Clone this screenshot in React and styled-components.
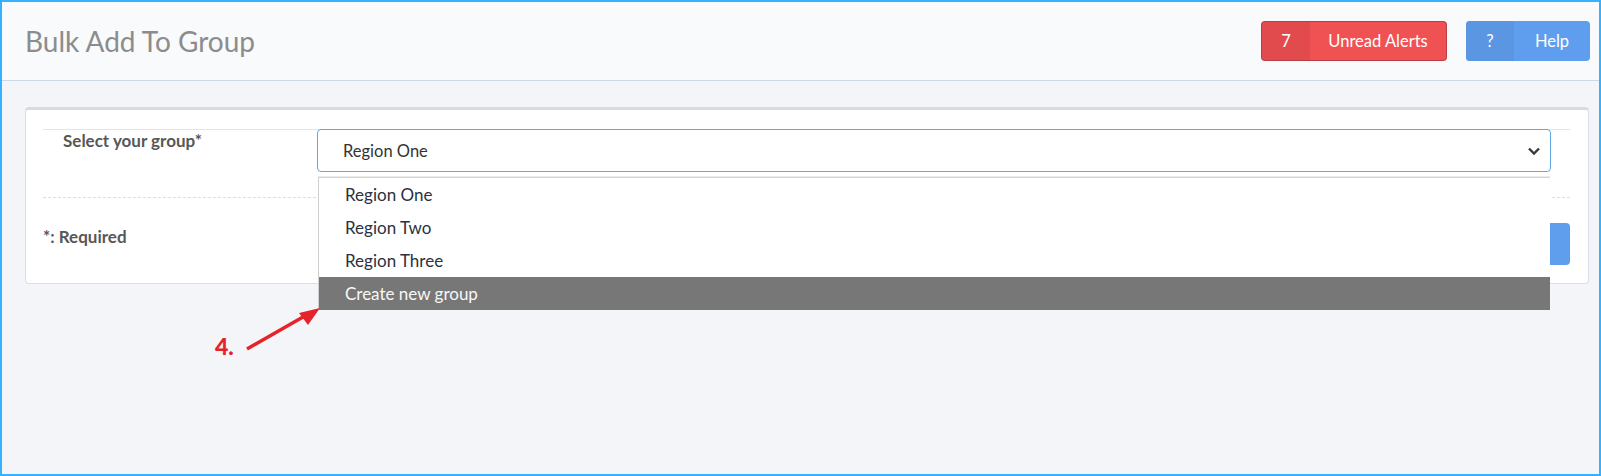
import React from 'react'
import styled, { createGlobalStyle } from 'styled-components'

const GlobalStyle = createGlobalStyle`
  html, body {
    margin: 0;
    padding: 0;
  }
  body {
    font-family: Lato, "Open Sans", sans-serif;
    background: #f4f5f9;
  }
  * {
    box-sizing: border-box;
  }
`

const Frame = styled.div`
  width: 1601px;
  height: 476px;
  border: 2px solid #36b1ff;
  display: flex;
  flex-direction: column;
  background: #f4f5f9;
  overflow: hidden;
`

const Header = styled.header`
  flex-shrink: 0;
  height: 79px;
  display: flex;
  align-items: center;
  justify-content: space-between;
  padding: 0 9px 0 23px;
  background: #f9fafc;
  border-bottom: 1px solid #c9d9e6;
`

const Title = styled.h1`
  margin: 0;
  font-size: 28px;
  font-weight: 400;
  color: #8c8c8c;
`

const Actions = styled.div`
  display: flex;
  gap: 19px;
`

const SplitButton = styled.button`
  display: flex;
  height: 40px;
  padding: 0;
  border: ${(p) => (p.$outlined ? '1px solid rgba(0,0,0,0.22)' : 'none')};
  border-radius: 4px;
  overflow: hidden;
  background: ${(p) => p.$color};
  color: #fff;
  font-family: inherit;
  font-size: 16.5px;
  cursor: pointer;
`

const Count = styled.span`
  width: 48px;
  display: flex;
  align-items: center;
  justify-content: center;
  background: ${(p) => p.$shade};
`

const ButtonLabel = styled.span`
  width: ${(p) => p.$width}px;
  display: flex;
  align-items: center;
  justify-content: center;
`

const Content = styled.main`
  position: relative;
  flex: 1;
  padding: 26px 10px 0 23px;
`

const Card = styled.section`
  background: #fff;
  border: 1px solid #d6dfe8;
  border-top: 3px solid #d3dce4;
  border-radius: 4px;
  padding: 19px 18px 18px 17px;
`

const FieldRow = styled.div`
  display: flex;
  border-top: 1px solid #e4e4e4;
  padding-bottom: 25px;
`

const FieldLabel = styled.label`
  width: 274px;
  padding: 0 0 0 20px;
  font-size: 17px;
  line-height: 22px;
  font-weight: 700;
  color: #575757;
`

const Select = styled.div`
  position: relative;
  flex: 1;
  margin: -1px 19px 0 0;
  height: 43px;
  display: flex;
  align-items: center;
  justify-content: space-between;
  padding: 0 9px 0 25px;
  border: 1px solid #62a8e5;
  border-radius: 4px;
  font-size: 16.5px;
  color: #333;
`

const Menu = styled.ul`
  position: absolute;
  z-index: 2;
  top: 47px;
  left: 0;
  right: 0;
  margin: 0;
  padding: 0;
  list-style: none;
  background: #fff;
  border-top: 1px solid #d4d4d4;
  border-left: 1px solid #cfcfcf;
  box-shadow: 0 -1px 0 #ececec;
`

const MenuItem = styled.li`
  height: 33px;
  line-height: 33px;
  padding-left: 26px;
  font-size: 17px;
  color: ${(p) => (p.$active ? '#f7f7f7' : '#2a3140')};
  background: ${(p) => (p.$active ? '#777777' : 'transparent')};
`

const Footer = styled.div`
  display: flex;
  justify-content: space-between;
  align-items: flex-start;
  border-top: 1px dashed #dedede;
  padding-top: 25px;
`

const Required = styled.span`
  margin-top: 3px;
  font-size: 17px;
  line-height: 22px;
  font-weight: 700;
  color: #575757;
`

const SubmitButton = styled.button`
  width: 110px;
  height: 42px;
  border: none;
  border-radius: 4px;
  background: #5f9ded;
  color: #fff;
  font-family: inherit;
  font-size: 16px;
`

const StepLabel = styled.span`
  position: absolute;
  z-index: 3;
  left: 213px;
  top: 253px;
  font-size: 23px;
  line-height: 24px;
  font-weight: 900;
  color: #e5232a;
`

const Pointer = styled.svg`
  position: absolute;
  z-index: 3;
  left: 228px;
  top: 214px;
`

const Chevron = () => (
  <svg width="14" height="10" viewBox="0 0 14 10">
    <path d="M2 2.5 L7 7.5 L12 2.5" fill="none" stroke="#343a40" strokeWidth="2.4" />
  </svg>
)

const options = ['Region One', 'Region Two', 'Region Three', 'Create new group']

export default function App() {
  return (
    <>
      <GlobalStyle />
      <Frame>
        <Header>
          <Title>Bulk Add To Group</Title>
          <Actions>
            <SplitButton $color="#f05153" $outlined>
              <Count $shade="#e24b4e">7</Count>
              <ButtonLabel $width={136}>Unread Alerts</ButtonLabel>
            </SplitButton>
            <SplitButton $color="#5f9eee">
              <Count $shade="#5b96e3">?</Count>
              <ButtonLabel $width={76}>Help</ButtonLabel>
            </SplitButton>
          </Actions>
        </Header>
        <Content>
          <Card>
            <FieldRow>
              <FieldLabel>Select your group*</FieldLabel>
              <Select>
                <span>Region One</span>
                <Chevron />
                <Menu>
                  {options.map((o, i) => (
                    <MenuItem key={o} $active={i === options.length - 1}>
                      {o}
                    </MenuItem>
                  ))}
                </Menu>
              </Select>
            </FieldRow>
            <Footer>
              <Required>*: Required</Required>
              <SubmitButton>Submit</SubmitButton>
            </Footer>
          </Card>
          <StepLabel>4.</StepLabel>
          <Pointer width="100" height="65" viewBox="0 0 100 65">
            <line x1="17" y1="54" x2="73" y2="22" stroke="#e5232a" strokeWidth="3.5" />
            <polygon points="90,13 69,18 78,30" fill="#e5232a" />
          </Pointer>
        </Content>
      </Frame>
    </>
  )
}
